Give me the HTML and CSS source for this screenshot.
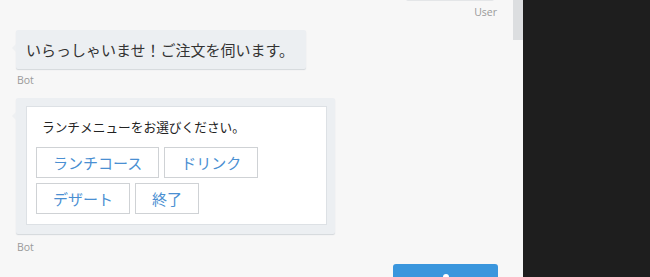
FILE: index.html
```html
<!DOCTYPE html>
<html lang="ja">
  <head>
    <meta charset="UTF-8" />
    <meta name="viewport" content="width=device-width, initial-scale=1.0" />
    <title>Chat</title>
    <link rel="stylesheet" href="styles.css">
  </head>
  <body>
    <div id="app">
      <div class="panel">
        <div class="log">
          <div class="msg user">
            <div class="bubble user-bubble"></div>
            <div class="who">User</div>
          </div>
          <div class="msg bot">
            <div class="bubble bot-bubble">いらっしゃいませ！ご注文を伺います。</div>
            <div class="who">Bot</div>
          </div>
          <div class="msg bot last">
            <div class="bubble bot-bubble card-bubble">
              <div class="card">
                <div class="card-title">ランチメニューをお選びください。</div>
                <div class="choices">
                  <span class="choice">ランチコース</span>
                  <span class="choice">ドリンク</span>
                  <span class="choice">デザート</span>
                  <span class="choice">終了</span>
                </div>
              </div>
            </div>
            <div class="who">Bot</div>
          </div>
          <div class="msg user">
            <div class="send-btn"><span class="dot"></span></div>
          </div>
        </div>
        <div class="scrollbar"><div class="thumb"></div></div>
      </div>
      <div class="side"></div>
    </div>
  </body>
</html>
```

FILE: styles.css
```css
* {
  margin: 0;
  padding: 0;
  box-sizing: border-box;
}
html,
body {
  height: 100%;
  overflow: hidden;
}
body {
  font-family: "Noto Sans CJK JP", "Noto Sans", sans-serif;
  background-color: #1e1e1e;
}
#app {
  display: flex;
  height: 277px;
}
.panel {
  width: 523px;
  display: flex;
  background-color: #f7f7f7;
}
.log {
  flex: 1;
  padding: 0 16px;
  display: flex;
  flex-direction: column;
}
.msg {
  display: flex;
  flex-direction: column;
}
.msg.user {
  align-items: flex-end;
}
.msg.bot {
  align-items: flex-start;
}
.bubble {
  position: relative;
  border-radius: 2px;
}
.user-bubble {
  margin-top: -38px;
  height: 39px;
  width: 88px;
  margin-right: 3px;
  background-color: #ffffff;
  border-bottom: 1px solid #e4e6e8;
}
.bot-bubble {
  background-color: #eceff2;
  box-shadow: 0 1px 1px #d3d7db;
  color: #333;
  font-size: 15px;
  line-height: 39px;
  height: 39px;
  padding: 0 12px 0 10px;
}
.bot-bubble::before {
  content: "";
  position: absolute;
  left: -4px;
  top: 14px;
  border-top: 4px solid transparent;
  border-bottom: 4px solid transparent;
  border-right: 4px solid #eef0f2;
}
.card-bubble {
  height: auto;
  line-height: normal;
  padding: 8px 8px 9px 10px;
}
.who {
  font-family: "Open Sans", "Noto Sans", sans-serif;
  font-size: 10.5px;
  color: #9a9a9a;
  line-height: 16px;
  padding: 3px 1px 0;
}
.user .who {
  padding: 3px 0 0;
  margin-bottom: 10px;
}
.bot .who {
  padding-top: 3px;
  margin-bottom: 10px;
}
.bot.last .who {
  padding-top: 5px;
  margin-bottom: 0;
}
.card {
  width: 301px;
  background-color: #fff;
  border: 1px solid #dde1e5;
  padding: 9px 9px 10px;
}
.card-title {
  font-size: 12.7px;
  color: #222;
  line-height: 22px;
  padding: 0 6px;
  margin-bottom: 9px;
}
.choices {
  display: flex;
  flex-wrap: wrap;
  gap: 5px;
}
.choice {
  display: block;
  border: 1px solid #cfd2d5;
  padding: 0 16px;
  height: 31px;
  line-height: 29px;
  font-size: 15px;
  color: #4a8fd2;
  cursor: pointer;
}
.choice:hover {
  background-color: #f2f7fc;
}
.send-btn {
  margin-top: 9px;
  width: 105px;
  height: 36px;
  margin-right: -1px;
  background-color: #3a96dd;
  border-radius: 3px;
  display: flex;
  justify-content: center;
  padding-top: 10px;
}
.dot {
  width: 6px;
  height: 6px;
  border-radius: 50%;
  background-color: #fff;
}
.scrollbar {
  width: 10px;
}
.thumb {
  height: 40px;
  background-color: #dcdee0;
}
.side {
  flex: 1;
  background-color: #1e1e1e;
}
```
